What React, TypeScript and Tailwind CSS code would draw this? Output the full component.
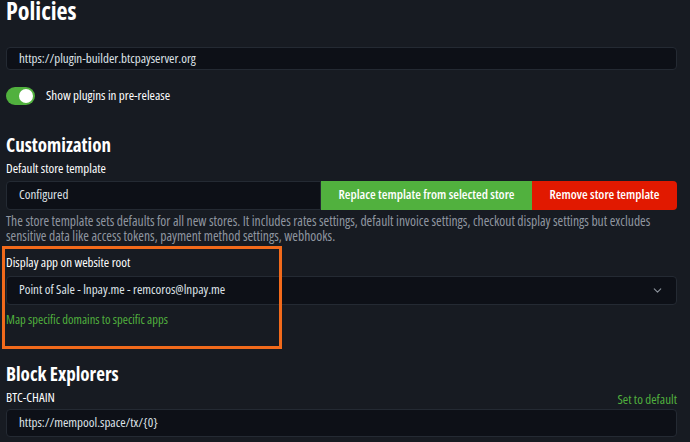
import React from 'react';
import { ChevronDown } from 'lucide-react';

const font = { fontFamily: '"Open Sans", "Liberation Sans", sans-serif' };

function Field({ children, className = '' }: { children: React.ReactNode; className?: string }) {
  return (
    <div className={`flex items-center rounded border border-[#242a33] bg-[#0d1017] px-3 text-[13px] text-[#dfe3e8] ${className}`}>
      {children}
    </div>
  );
}

export default function App() {
  return (
    <div className="relative h-[442px] w-[690px] overflow-hidden bg-[#171b22] pl-[6px] pr-[13px] font-stretch-[76%]" style={font}>
      <h1 className="-mt-[5px] text-[24px] font-bold leading-[32px] text-white">Policies</h1>

      <Field className="mt-[20px] h-[23px] items-start pt-[1px] text-[#8b929b]">https://plugin-builder.btcpayserver.org</Field>

      <div className="mt-[16px] flex items-center gap-[11px]">
        <div className="flex h-[18px] w-[29px] items-center justify-end rounded-full bg-[#51b13e] pr-[2px]">
          <div className="h-[14px] w-[14px] rounded-full bg-white" />
        </div>
        <span className="text-[13px] text-white">Show plugins in pre-release</span>
      </div>

      <h2 className="mt-[27px] text-[19px] font-bold leading-[24px] text-white">Customization</h2>
      <div className="mt-[2px] text-[13px] leading-[18px] text-white">Default store template</div>

      <div className="mt-[4px] flex h-[29px]">
        <Field className="h-full w-[315px] rounded-r-none">Configured</Field>
        <button className="h-full w-[211px] bg-[#51b13e] text-[13px] font-semibold text-white">Replace template from selected store</button>
        <button className="h-full flex-1 rounded-r bg-[#e11900] text-[13px] font-semibold text-white">Remove store template</button>
      </div>
      <p className="mt-[3px] text-[13.6px] leading-[15px] text-[#8f96a0]">
        The store template sets defaults for all new stores. It includes rates settings, default invoice settings, checkout display settings but excludes sensitive data like access tokens, payment method settings, webhooks.
      </p>

      <div className="mt-[10px] text-[13px] leading-[18px] text-white">Display app on website root</div>
      <Field className="mt-[5px] h-[29px] justify-between">
        <span>Point of Sale - lnpay.me - remcoros@lnpay.me</span>
        <ChevronDown className="h-[13px] w-[13px] text-[#8b929b]" strokeWidth={2} />
      </Field>
      <div className="mt-[7px] text-[12.5px] leading-[16px] text-[#51b13e]">Map specific domains to specific apps</div>

      <h2 className="mt-[34px] text-[19px] font-bold leading-[24px] text-white">Block Explorers</h2>
      <div className="mt-[2px] flex items-end justify-between text-[13px] leading-[18px]">
        <span className="text-white">BTC-CHAIN</span>
        <span className="mb-[-2px] text-[#51b13e]">Set to default</span>
      </div>
      <Field className="mt-[3px] h-[28px]">https://mempool.space/tx/{'{0}'}</Field>

      <div className="pointer-events-none absolute left-[2px] top-[246px] h-[103px] w-[280px] border-[3px] border-[#f26a1b]" />
    </div>
  );
}
